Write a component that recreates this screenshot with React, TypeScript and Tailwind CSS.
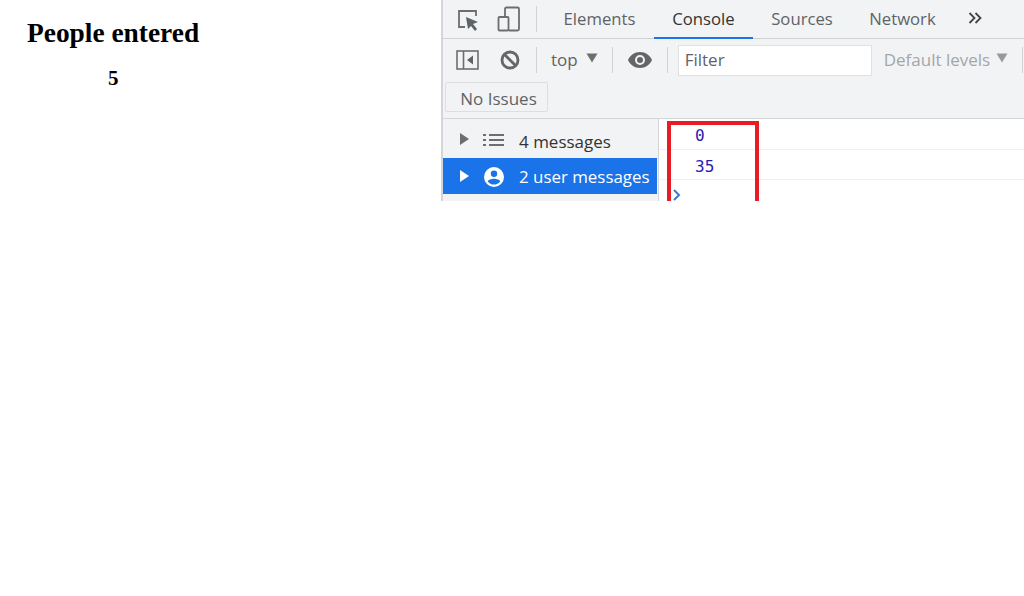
import React from 'react';

const uiFont = 'font-["Open_Sans","Noto_Sans",sans-serif]';

const Divider = ({ className = '' }: { className?: string }) => (
    <div className={`w-px h-[26px] bg-[#d0d2d5] shrink-0 ${className}`} />
);

const Caret = ({ color = '#6e6e6e' }: { color?: string }) => (
    <svg width="12" height="10" viewBox="0 0 12 10" className="block">
        <path d="M0.5 0.5 H11.5 L6 9.5 Z" fill={color} />
    </svg>
);

const Tab = ({ label, active, className = '' }: { label: string; active?: boolean; className?: string }) => (
    <div
        className={`h-[39px] flex items-center justify-center text-[16.7px] border-b-2 ${
            active ? 'border-[#1a73e8] text-[#333]' : 'border-transparent text-[#5f6368]'
        } ${className}`}
    >
        {label}
    </div>
);

const DevTools = () => (
    <div className={`relative flex-1 h-[201px] flex flex-col border-l-2 border-[#d3d5d8] bg-[#f1f3f4] ${uiFont}`}>
        {/* tab strip */}
        <div className="h-[39px] flex items-center border-b border-[#cfd1d4] shrink-0">
            <svg width="24" height="24" viewBox="0 0 24 24" className="ml-[13px]" fill="none">
                <path d="M9 20 H3 V4 H20 V9" stroke="#6e6e6e" strokeWidth="1.8" />
                <path d="M10 10 L22 15 L17 17 L21 22 L19 24 L15 19 L12 22 Z" fill="#5f6368" />
            </svg>
            <svg width="24" height="26" viewBox="0 0 24 26" className="ml-[17px]" fill="none" stroke="#6e6e6e" strokeWidth="1.8">
                <path d="M8 11 V3 Q8 1.500 9.500 1.500 H20.500 Q22 1.500 22 3 V23 Q22 24.500 20.500 24.500 H12" />
                <rect x="1.500" y="11" width="10" height="13.500" rx="1" />
            </svg>
            <Divider className="ml-[15px]" />
            <Tab label="Elements" className="ml-[8px] w-[109px] -mb-px" />
            <Tab label="Console" active className="w-[99px] -mb-px" />
            <Tab label="Sources" className="w-[98px] -mb-px" />
            <Tab label="Network" className="w-[103px] -mb-px" />
            <svg width="14" height="12" viewBox="0 0 14 12" className="ml-[14px] -mt-[3px]" fill="none" stroke="#444" strokeWidth="1.8">
                <path d="M1.500 1 L6.500 6 L1.500 11 M7.500 1 L12.500 6 L7.500 11" />
            </svg>
        </div>

        {/* console toolbar */}
        <div className="h-[42px] flex items-center shrink-0">
            <svg width="24" height="20" viewBox="0 0 24 20" className="ml-[13px] shrink-0" fill="none">
                <rect x="1" y="1" width="21" height="18" stroke="#6e6e6e" strokeWidth="1.600" />
                <path d="M7.500 1 V19" stroke="#6e6e6e" strokeWidth="1.600" />
                <path d="M17 5.500 V14.500 L11 10 Z" fill="#5f6368" />
            </svg>
            <svg width="20" height="20" viewBox="0 0 20 20" className="ml-[20px] shrink-0" fill="none" stroke="#666" strokeWidth="2.800">
                <circle cx="10" cy="10" r="8" />
                <path d="M4.500 4.500 L15.500 15.500" />
            </svg>
            <Divider className="ml-[16px]" />
            <span className="ml-[14px] text-[17px] text-[#5f6368]">top</span>
            <div className="ml-[8px] -mt-[5px]"><Caret /></div>
            <Divider className="ml-[14px]" />
            <svg width="24" height="16" viewBox="0 0 24 16" className="ml-[15px] shrink-0">
                <path fillRule="evenodd" d="M12 0 C6.500 0 2 3.300 0 8 C2 12.700 6.500 16 12 16 C17.500 16 22 12.700 24 8 C22 3.300 17.500 0 12 0 Z M12 13 A5 5 0 1 1 12 3 A5 5 0 1 1 12 13 Z" fill="#666" />
                <circle cx="12" cy="8" r="3" fill="#666" />
            </svg>
            <Divider className="ml-[15px]" />
            <div className="ml-[10px] w-[194px] h-[31px] shrink-0 bg-white border border-[#dfe1e3] flex items-center pl-[6px] text-[17px] text-[#5f6368]">
                Filter
            </div>
            <span className="ml-[12px] text-[17px] text-[#a4a6a9] whitespace-nowrap">Default levels</span>
            <div className="ml-[6px] -mt-[5px]"><Caret color="#999" /></div>
            <Divider className="ml-[14px]" />
        </div>

        {/* issues row */}
        <div className="h-[37px] pl-[2px] shrink-0">
            <div className="w-[103px] h-[30px] mt-[1px] pl-[4px] pt-[3px] border border-[#dcdee0] rounded-[2px] flex items-center justify-center text-[17px] text-[#5f6368]">
                No Issues
            </div>
        </div>

        {/* sidebar and messages */}
        <div className="flex-1 min-h-0 flex border-t border-[#d3d5d8]">
            <div className="w-[215px] shrink-0 flex flex-col">
                <div className="h-[39px] flex items-center text-[17px] text-[#333]">
                    <svg width="9" height="12" viewBox="0 0 9 12" className="ml-[17px]">
                        <path d="M0 0 L9 6 L0 12 Z" fill="#6e6e6e" />
                    </svg>
                    <svg width="21" height="14" viewBox="0 0 21 14" className="ml-[14px] mt-[3px]" fill="none" stroke="#6e6e6e" strokeWidth="1.800">
                        <path d="M0 2 H3 M6 2 H21 M0 7 H3 M6 7 H21 M0 12 H3 M6 12 H21" />
                    </svg>
                    <span className="ml-[15px] mt-[6px]">4 messages</span>
                </div>
                <div className="h-[36px] mr-px flex items-center text-[16.9px] text-white bg-[#1a73e8] whitespace-nowrap">
                    <svg width="9" height="12" viewBox="0 0 9 12" className="ml-[17px] shrink-0">
                        <path d="M0 0 L9 6 L0 12 Z" fill="#fff" />
                    </svg>
                    <svg width="20" height="20" viewBox="0 0 20 20" className="ml-[15px] mt-[2px] shrink-0">
                        <path fillRule="evenodd" d="M10 0 A10 10 0 1 0 10 20 A10 10 0 1 0 10 0 Z M10 3.500 A3.200 3.200 0 1 1 10 9.900 A3.200 3.200 0 1 1 10 3.500 Z M10 17.500 C7.500 17.500 5.200 16.300 3.800 14.400 C4.200 12.800 7.500 11.800 10 11.800 C12.500 11.800 15.800 12.800 16.200 14.400 C14.800 16.300 12.500 17.500 10 17.500 Z" fill="#fff" />
                    </svg>
                    <span className="ml-[15px] mt-[2px]">2 user messages</span>
                </div>
            </div>
            <div className="flex-1 bg-white border-l border-[#d3d5d8] font-['DejaVu_Sans_Mono',monospace] text-[16px] text-[#2b1cb0]">
                <div className="h-[31px] pl-[36px] pt-[7px] leading-[20px] border-b border-[#f0f0f0]">0</div>
                <div className="h-[30px] pl-[36px] pt-[7px] leading-[20px] border-b border-[#f0f0f0]">35</div>
                <svg width="8" height="12" viewBox="0 0 8 12" className="ml-[14px] mt-[9px]" fill="none" stroke="#3b78d8" strokeWidth="2">
                    <path d="M1 1 L6 6 L1 11" />
                </svg>
            </div>
        </div>

        {/* red annotation drawn over the screenshot */}
        <div className="absolute left-[224px] top-[121px] w-[92px] h-[90px] border-4 border-[#e81c24]" />
    </div>
);

export default function App() {
    return (
        <div className="w-[1024px] h-[596px] bg-white overflow-hidden flex items-start">
            <div className="w-[441px] shrink-0 font-['Liberation_Serif',serif] font-bold text-black">
                <h1 className="mt-[17px] ml-[27px] text-[27.4px] leading-[32px]">People entered</h1>
                <p className="mt-[17px] ml-[108px] text-[21px] leading-[24px]">5</p>
            </div>
            <div className="flex-1 h-[201px] overflow-hidden flex">
                <DevTools />
            </div>
        </div>
    );
}
